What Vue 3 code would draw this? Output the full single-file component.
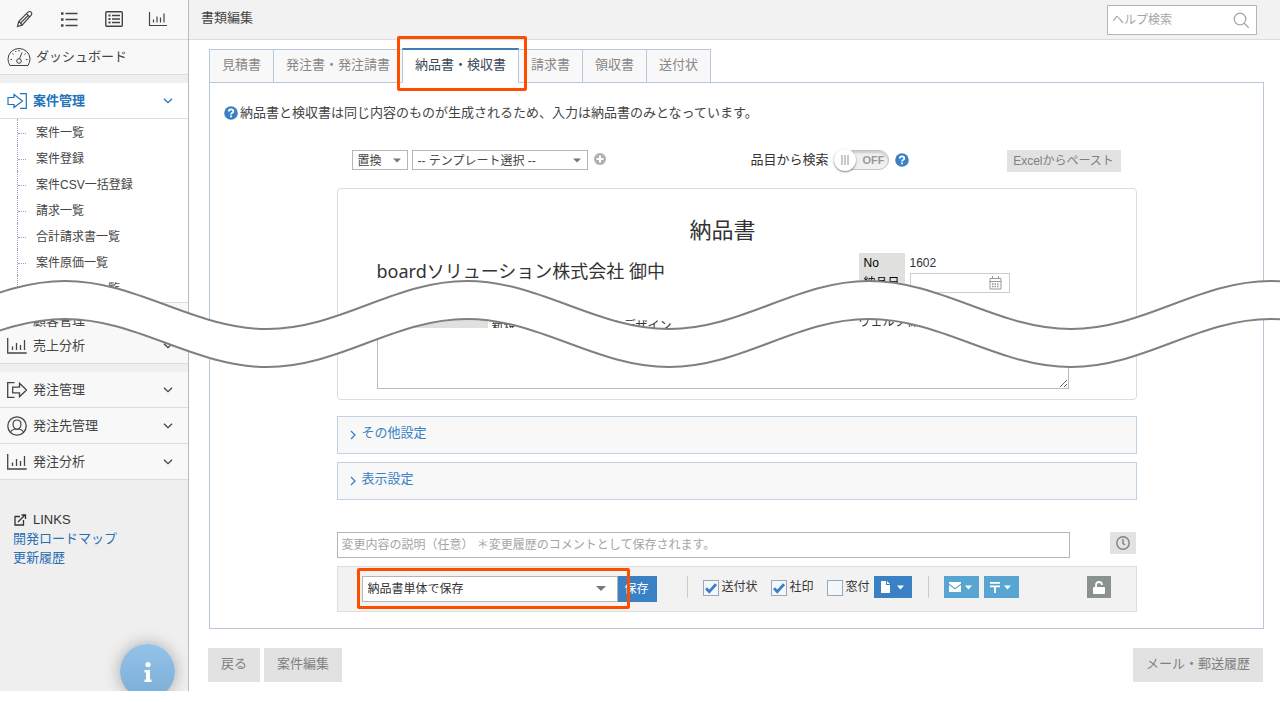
<script setup>
import { ref } from 'vue'

const tabs = ['見積書', '発注書・発注請書', '納品書・検収書', '請求書', '領収書', '送付状']
const activeTab = ref(2)

const subItems = ['案件一覧', '案件登録', '案件CSV一括登録', '請求一覧', '合計請求書一覧', '案件原価一覧', '案件別発注一覧']

const orderMenu = [
  { label: '発注管理', icon: 'out' },
  { label: '発注先管理', icon: 'person' },
  { label: '発注分析', icon: 'chart' },
]

const options = ref([
  { id: 'cover', label: '送付状', on: true },
  { id: 'seal', label: '社印', on: true },
  { id: 'window', label: '窓付', on: false },
])
</script>

<template>
  <div class="page">
    <aside class="sidebar">
      <nav class="quick">
        <button type="button" aria-label="編集">
          <svg width="20" height="20" viewBox="0 0 20 20"><path d="M2.500 17.500l1.200-5L13 3.200q1.800-1.400 3.200 0q1.300 1.400 0 3L7.100 16.200zM4 12.500l3.400 3.500M11.500 4.700l3.600 3.600M6 13.700l7.200-7.200" stroke-width="1.200" /></svg>
        </button>
        <button type="button" aria-label="一覧">
          <svg width="20" height="20" viewBox="0 0 20 20"><path d="M6.500 4.500h12M6.500 10.500h12M6.500 16.500h12" stroke-width="1.300" /><path d="M2 3.300h2.500v2.500h-2.500zM2 9.300h2.500v2.500h-2.500zM2 15.300h2.500v2.500h-2.500z" class="solid" /></svg>
        </button>
        <button type="button" aria-label="明細">
          <svg width="20" height="20" viewBox="0 0 20 20"><rect x="1.800" y="2.800" width="16.500" height="14.500" rx="1" stroke-width="1.400" /><path d="M8 6.500h8M8 10h8M8 13.500h8" stroke-width="1.300" /><path d="M4.500 6.500h2M4.500 10h2M4.500 13.500h2" stroke-width="1.800" /></svg>
        </button>
        <button type="button" aria-label="分析">
          <svg width="20" height="20" viewBox="0 0 20 20"><path d="M1.500 3v13.500h17.500M5.500 13.500v-3M9 13.500v-6M12.500 13.500v-5M16 13.500v-9" stroke-width="1.200" /></svg>
        </button>
      </nav>

      <a class="row dashboard" href="#dashboard">
        <svg width="24" height="20" viewBox="0 0 24 20"><path d="M3 18.500q-2-3-2-6.500a11 10.500 0 0 1 22 0q0 3.500-2 6.500z" /><circle cx="12" cy="14" r="2.300" /><path d="M12.500 11.700l2.500-6.200M3.500 12.500h1.500M19 12.500h1.500M5.500 6.500l1.200 1M17.500 7.500l1.200-1M12 3v1.500M8.500 4l.5 1" /></svg>
        <span>ダッシュボード</span>
      </a>

      <button type="button" class="row current">
        <svg width="20" height="16" viewBox="0 0 20 16"><path d="M1 4.500h6v-3l8.500 6.500-8.500 6.500v-3h-6zM13 .700h6.300v14.600h-6.300" stroke-width="1.200" /></svg>
        <span>案件管理</span>
        <svg class="chev" width="10" height="6" viewBox="0 0 10 6"><path d="M1 .7l4 4 4-4" /></svg>
      </button>
      <ul class="sub">
        <li v-for="item in subItems" :key="item"><a href="#item">{{ item }}</a></li>
      </ul>

      <div class="clipped">
        <button type="button" class="row">
          <svg width="20" height="20" viewBox="0 0 20 20"><path d="M2 9l6-5 10 4-2 6-6-3-3 3z" /></svg>
          <span>顧客管理</span>
        </button>
      </div>
      <button type="button" class="row">
        <svg width="20" height="20" viewBox="0 0 20 20"><path d="M.700 2v15h19M5.500 14v-3.500M9.500 14v-7M13.500 14v-5M17.500 14v-10" stroke-width="1.300" /></svg>
        <span>売上分析</span>
        <svg class="chev" width="10" height="6" viewBox="0 0 10 6"><path d="M1 .7l4 4 4-4" /></svg>
      </button>

      <div class="group">
        <button v-for="m in orderMenu" :key="m.label" type="button" class="row">
          <svg v-if="m.icon === 'out'" width="20" height="20" viewBox="0 0 20 20"><path d="M7.500 2.700h-6.800v14.600h6.800M5.700 7.200h6.800v-3.900l7 6.700-7 6.700v-3.900h-6.800z" stroke-width="1.300" /></svg>
          <svg v-else-if="m.icon === 'person'" width="20" height="20" viewBox="0 0 20 20"><circle cx="10" cy="10" r="9.200" stroke-width="1.300" /><path d="M10 4q4 0 4 4.500q-.500 4.500-4 4.500t-4-4.500q0-4.500 4-4.500zM3.500 16.500q.500-2.500 4.500-3.500l2 .5 2-.5q4 1 4.500 3.500" stroke-width="1.200" /></svg>
          <svg v-else width="20" height="20" viewBox="0 0 20 20"><path d="M.700 2v15h19M5.500 14v-3.500M9.500 14v-7M13.500 14v-5M17.500 14v-10" stroke-width="1.300" /></svg>
          <span>{{ m.label }}</span>
          <svg class="chev" width="10" height="6" viewBox="0 0 10 6"><path d="M1 .7l4 4 4-4" /></svg>
        </button>
      </div>

      <div class="links">
        <p>
          <svg width="14" height="14" viewBox="0 0 14 14"><path d="M7 3.500h-5v8.500h8.500v-5M5 9l6.500-6.500M8.500 2h4v4" stroke-width="1.300" /></svg>
          LINKS
        </p>
        <a href="#roadmap">開発ロードマップ</a>
        <a href="#updates">更新履歴</a>
      </div>

      <button type="button" class="info" aria-label="情報">
        <svg width="8" height="20" viewBox="0 0 8 20"><circle cx="4" cy="2.600" r="2.600" /><path d="M.500 8h5.500v9.500h1.500v2.500h-7v-2.500h1.500v-7h-1.500z" /></svg>
      </button>
    </aside>

    <main class="main">
      <header class="top">
        <h1>書類編集</h1>
        <div class="search">
          <input type="text" placeholder="ヘルプ検索" aria-label="ヘルプ検索">
          <svg width="18" height="18" viewBox="0 0 18 18"><circle cx="8" cy="8" r="5.800" /><path d="M12.200 12.200l4.500 4.500" /></svg>
        </div>
      </header>

      <div class="content">
        <div class="tabs" role="tablist">
          <button
            v-for="(t, i) in tabs"
            :key="t"
            type="button"
            role="tab"
            :aria-selected="i === activeTab"
            :class="{ active: i === activeTab }"
            @click="activeTab = i"
          >{{ t }}</button>
        </div>

        <section class="panel">
          <p class="note">
            <svg class="help" width="14" height="14" viewBox="0 0 14 14"><circle cx="7" cy="7" r="6.800" /><path d="M4.800 5.500q0-2.200 2.200-2.200t2.300 1.900q0 1.200-1.300 1.800q-1 .500-1 1.500M7 9.500v1.700" /></svg>
            納品書と検収書は同じ内容のものが生成されるため、入力は納品書のみとなっています。
          </p>

          <div class="column">
            <div class="toolbar">
              <span class="select mode">
                <select aria-label="適用方法"><option>置換</option></select>
                <svg width="8" height="5" viewBox="0 0 8 5"><path d="M0 .5h8l-4 4z" /></svg>
              </span>
              <span class="select template">
                <select aria-label="テンプレート"><option>-- テンプレート選択 --</option></select>
                <svg width="8" height="5" viewBox="0 0 8 5"><path d="M0 .5h8l-4 4z" /></svg>
              </span>
              <button type="button" class="plus" aria-label="追加">
                <svg width="12" height="12" viewBox="0 0 12 12"><circle cx="6" cy="6" r="6" /><path d="M6 2.500v7M2.500 6h7" /></svg>
              </button>
              <label class="switch">
                品目から検索
                <input type="checkbox">
                <span class="track"><i class="knob"></i>OFF</span>
              </label>
              <svg class="help" width="14" height="14" viewBox="0 0 14 14"><circle cx="7" cy="7" r="6.800" /><path d="M4.800 5.500q0-2.200 2.200-2.200t2.300 1.900q0 1.200-1.300 1.800q-1 .500-1 1.500M7 9.500v1.700" /></svg>
              <button type="button" class="gray excel">Excelからペースト</button>
            </div>

            <article class="doc">
              <h2>納品書</h2>
              <div class="doc-head">
                <div>
                  <p class="client">boardソリューション株式会社 御中</p>
                  <dl class="subject"><dt>件名</dt><dd>新規コーポレートサイトデザイン</dd></dl>
                </div>
                <div>
                  <table>
                    <tbody>
                      <tr><th>No</th><td>1602</td></tr>
                      <tr>
                        <th><label for="date">納品日</label></th>
                        <td>
                          <span class="date">
                            <input id="date" type="text">
                            <svg width="13" height="14" viewBox="0 0 13 14"><path d="M1 2.500h11v10.500h-11zM1 5.500h11M3.500 0v3M9.500 0v3" /><path d="M3 8h7.500M3 10.500h7.500" stroke-dasharray="1.500 1" stroke-width="1.500" /></svg>
                          </span>
                        </td>
                      </tr>
                    </tbody>
                  </table>
                  <p class="company">ヴェルク株式会社</p>
                </div>
              </div>
              <textarea aria-label="備考"></textarea>
            </article>

            <div class="accordions">
              <button v-for="name in ['その他設定', '表示設定']" :key="name" type="button">
                <svg width="6" height="10" viewBox="0 0 6 10"><path d="M1 1l4 4-4 4" /></svg>
                {{ name }}
              </button>
            </div>

            <div class="comment">
              <input type="text" aria-label="変更内容の説明" placeholder="変更内容の説明（任意） ＊変更履歴のコメントとして保存されます。">
              <button type="button" class="gray clock" aria-label="履歴">
                <svg width="14" height="14" viewBox="0 0 14 14"><circle cx="7" cy="7" r="6.200" /><path d="M7 3v4.500l2 1.500" /></svg>
              </button>
            </div>

            <div class="actions">
              <span class="select save-mode">
                <select aria-label="保存方法"><option>納品書単体で保存</option></select>
                <svg width="10" height="5" viewBox="0 0 10 5"><path d="M0 0h10l-5 5z" /></svg>
              </span>
              <button type="button" class="save">保存</button>
              <span class="rule"></span>
              <label v-for="o in options" :key="o.id" class="check">
                <input v-model="o.on" type="checkbox">
                <span class="box"><svg v-if="o.on" width="12" height="12" viewBox="0 0 12 12"><path d="M1 6.200l3.300 3.500 6.700-7.500" /></svg></span>
                {{ o.label }}
              </label>
              <button type="button" class="menu file" aria-label="ファイル">
                <svg width="9" height="12" viewBox="0 0 9 12"><path d="M0 0h5v4h4v8h-9zM6 0l3 3h-3z" /></svg>
                <svg width="8" height="5" viewBox="0 0 8 5"><path d="M0 .5h7l-3.500 4z" /></svg>
              </button>
              <span class="rule second"></span>
              <button type="button" class="menu light" aria-label="メール">
                <svg width="12" height="10" viewBox="0 0 12 10"><path d="M0 0h12v1.500l-6 4.500-6-4.500zM0 3l6 4.500 6-4.500v7h-12z" /></svg>
                <svg width="8" height="5" viewBox="0 0 8 5"><path d="M0 .5h7l-3.500 4z" /></svg>
              </button>
              <button type="button" class="menu light" aria-label="郵送">
                <svg width="10" height="11" viewBox="0 0 10 11"><path d="M0 0h10v1.700h-10zM0 3.500h10v1.700h-4.100v5.800h-1.800v-5.800h-4.100z" /></svg>
                <svg width="8" height="5" viewBox="0 0 8 5"><path d="M0 .5h7l-3.500 4z" /></svg>
              </button>
              <button type="button" class="menu lock" aria-label="ロック解除">
                <svg width="12" height="13" viewBox="0 0 12 13"><rect y="6" width="12" height="7" rx="1" /><path d="M3 7v-3q0-3 3-3t3 3" fill="none" stroke="#fff" stroke-width="1.800" /></svg>
              </button>
            </div>
          </div>
        </section>
      </div>

      <footer class="bottom">
        <button type="button" class="gray">戻る</button>
        <button type="button" class="gray">案件編集</button>
        <button type="button" class="gray mail">メール・郵送履歴</button>
      </footer>
    </main>

    <svg class="wave" viewBox="0 0 1280 90" preserveAspectRatio="none">
      <path class="band" d="M-136 54C-63 54-8 6 65 6S194 54 267 54 394 6 467 6 596 54 669 54 796 6 869 6 998 54 1071 54 1198 6 1271 6 1400 54 1473 54V92C1400 92 1344 44 1271 44S1144 92 1071 92 942 44 869 44 742 92 669 92 540 44 467 44 340 92 267 92 138 44 65 44-63 92-136 92z" />
    </svg>
  </div>
</template>

<style>
body {
  margin: 0;
  background: #fff;
}
</style>

<style scoped>
* {
  box-sizing: border-box;
}
.page {
  position: relative;
  display: flex;
  overflow: hidden;
  font: 13px/20px "Liberation Sans", "Noto Sans CJK JP", sans-serif;
  color: #444;
}
h1, h2, p, ul, dl, dd {
  margin: 0;
  padding: 0;
}
button, input, select, textarea {
  font: inherit;
  color: inherit;
  margin: 0;
  padding: 0;
  border: 0;
  border-radius: 0;
  background: none;
}
button {
  cursor: pointer;
}
a {
  color: inherit;
  text-decoration: none;
}
svg {
  display: block;
  flex: none;
  fill: none;
  stroke: currentColor;
}

/* sidebar */
.sidebar {
  position: relative;
  flex: none;
  width: 189px;
  overflow: hidden;
  background: #efefef;
  border-right: 1px solid #bbb;
}
.quick {
  display: flex;
  justify-content: space-between;
  align-items: center;
  height: 40px;
  padding: 0 20px 2px 15px;
  background: #f8f8f8;
  border-bottom: 1px solid #ddd;
}
.quick .solid {
  fill: currentColor;
  stroke: none;
}
.row {
  display: flex;
  align-items: center;
  gap: 6px;
  width: 100%;
  height: 36px;
  padding: 0 15px 0 7px;
  background: #f8f8f8;
  border-bottom: 1px solid #ddd;
  text-align: left;
}
.row .chev {
  margin-left: auto;
  stroke-width: 1.300;
}
.dashboard {
  height: 35px;
  gap: 5px;
}
.current {
  margin-top: 8px;
  background: #fff;
  color: #2273b9;
  font-weight: bold;
}
.sub {
  list-style: none;
  background: #fff;
  padding-left: 17px;
  height: 183px;
  overflow: hidden;
}
.sub li {
  display: flex;
  align-items: center;
  height: 26px;
  padding-top: 2px;
  border-left: 1px dotted #8fa4bb;
  font-size: 12px;
}
.sub li::before {
  content: "";
  width: 8px;
  margin-right: 10px;
  border-top: 1px dotted #8fa4bb;
}
.clipped {
  height: 26px;
  overflow: hidden;
  border-top: 1px solid #ddd;
}
.group {
  margin-top: 8px;
}
.links {
  padding: 30px 13px 120px;
  line-height: 19px;
}
.links p {
  display: flex;
  align-items: center;
  gap: 6px;
  color: #333;
}
.links a {
  display: block;
  color: #2a6fb5;
}
.info {
  position: absolute;
  right: 13px;
  bottom: -8px;
  display: flex;
  align-items: center;
  justify-content: center;
  width: 55px;
  height: 55px;
  border-radius: 50%;
  color: #fff;
  background: linear-gradient(#94c3e9, #7badd6);
  box-shadow: 0 0 16px rgba(0, 0, 0, .3);
}
.info svg {
  fill: #fff;
  stroke: none;
}

/* header and tabs */
.main {
  flex: 1;
  min-width: 0;
  padding-bottom: 9px;
}
.top {
  display: flex;
  justify-content: space-between;
  height: 40px;
  padding: 5px 23px 0 12px;
  background: #f2f2f2;
  border-bottom: 1px solid #ddd;
}
.top h1 {
  font-size: 13px;
  font-weight: normal;
  line-height: 26px;
}
.search {
  display: flex;
  align-items: center;
  width: 150px;
  height: 30px;
  padding: 0 6px 0 4px;
  background: #fff;
  border: 1px solid #b5b5b5;
  color: #a5a5a5;
}
.search input {
  flex: 1;
  min-width: 0;
  font-size: 12px;
}
.search svg {
  stroke-width: 1.300;
}
::placeholder {
  color: #a5a5a5;
  opacity: 1;
}
.content {
  padding: 8px 16px 0 20px;
}
.tabs {
  display: flex;
  align-items: flex-end;
  height: 35px;
  margin-bottom: -1px;
  padding-left: 1px;
}
.tabs button {
  position: relative;
  height: 34px;
  margin-left: -1px;
  padding: 0 12px 2px;
  color: #888;
  background: #f8f8f8;
  border: 1px solid #b9c8d9;
}
.tabs .active {
  z-index: 1;
  height: 35px;
  color: #3c4858;
  background: #fff;
  border-top: 2px solid #3e7db5;
  border-bottom-color: #fff;
}
.tabs .active::after,
.save-mode::after {
  content: "";
  position: absolute;
  inset: -14px -9px -9px -6px;
  border: 3px solid #ff4d00;
  border-radius: 2px;
  pointer-events: none;
}
.panel {
  border: 1px solid #b9c8d9;
  padding: 20px 0 16px;
}
.note {
  display: flex;
  align-items: center;
  gap: 2px;
  padding-left: 14px;
}
.help circle {
  fill: #3a80c4;
  stroke: none;
}
.help path {
  stroke: #fff;
  stroke-width: 1.800;
}
.column {
  width: 800px;
  max-width: 100%;
  margin: 27px auto 0;
}

/* toolbar */
.toolbar {
  display: flex;
  align-items: flex-start;
  height: 22px;
  padding: 0 16px 0 15px;
  font-size: 12px;
}
.select {
  position: relative;
  display: flex;
}
.select select {
  appearance: none;
  width: 100%;
  padding: 0 5px;
  background: #fff;
  border: 1px solid #b5b5b5;
  font-size: 12px;
}
.select svg {
  position: absolute;
  top: 8px;
  right: 7px;
  fill: #777;
  stroke: none;
  pointer-events: none;
}
.mode {
  width: 56px;
  height: 20px;
  margin-right: 4px;
}
.template {
  width: 176px;
  height: 20px;
}
.plus {
  margin: 3px 0 0 6px;
}
.plus circle {
  fill: #b0b0b0;
  stroke: none;
}
.plus path {
  stroke: #fff;
  stroke-width: 2;
}
.switch {
  display: flex;
  gap: 5px;
  margin: 0 6px 0 auto;
  font-size: 13px;
  color: #333;
}
.switch input,
.check input {
  position: absolute;
  opacity: 0;
}
.track {
  position: relative;
  width: 55px;
  height: 20px;
  padding-right: 3px;
  border: 1px solid #c4c4c4;
  border-radius: 10px;
  background: #f0f0f0;
  box-shadow: inset 0 2px 2px #ccc;
  text-align: right;
  font-size: 11px;
  font-weight: bold;
  line-height: 19px;
  color: #999;
}
.knob {
  position: absolute;
  left: -1px;
  top: -2px;
  display: flex;
  align-items: center;
  justify-content: center;
  width: 22px;
  height: 22px;
  border-radius: 50%;
  background: #fff;
  box-shadow: 0 1px 2px rgba(0, 0, 0, .5);
}
.knob::before {
  content: "";
  width: 8px;
  height: 10px;
  background: repeating-linear-gradient(90deg, #c8c8c8 0 2px, #fff 2px 3px);
}
.toolbar > .help {
  margin-top: 3px;
}
.gray {
  background: #e2e2e2;
  color: #808080;
}
.excel {
  width: 114px;
  height: 22px;
  margin-left: 98px;
}

/* document */
.doc {
  margin-top: 16px;
  padding: 26px 0 10px 39px;
  border: 1px solid #ddd;
  border-radius: 4px;
  color: #333;
}
.doc h2 {
  width: 692px;
  font-size: 22px;
  font-weight: normal;
  line-height: 32px;
  text-align: center;
}
.doc-head {
  display: grid;
  grid-template-columns: 482px 1fr;
  height: 75px;
  margin-top: 6px;
  overflow: hidden;
  font-size: 12px;
}
.client {
  padding-top: 6px;
  font-family: "Noto Sans", "Noto Sans CJK JP", sans-serif;
  font-size: 18px;
  line-height: 24px;
}
.subject {
  display: flex;
  gap: 4px;
  margin-top: 33px;
}
.subject dt {
  width: 111px;
  padding-left: 5px;
  background: #e0e0de;
}
table {
  border-collapse: collapse;
}
th {
  width: 46px;
  height: 20px;
  padding: 0 5px;
  background: #e0e0de;
  color: #000;
  font-weight: normal;
  text-align: left;
}
td {
  padding: 0 0 0 5px;
}
.date {
  display: flex;
  align-items: center;
  width: 100px;
  height: 20px;
  padding-right: 7px;
  border: 1px solid #ccc;
  color: #999;
}
.date input {
  flex: 1;
  min-width: 0;
}
.company {
  margin-top: 19px;
}
.doc textarea {
  display: block;
  width: 692px;
  height: 61px;
  border: 1px solid #bbb;
  border-top: 0;
  background: #fff;
}

/* settings and saving */
.accordions {
  display: grid;
  gap: 8px;
  margin-top: 16px;
}
.accordions button {
  display: flex;
  align-items: center;
  gap: 6px;
  height: 38px;
  padding: 0 12px 4px;
  background: #f8f8f8;
  border: 1px solid #c3d2e2;
  color: #3a80c4;
}
.accordions svg {
  margin-top: 4px;
  stroke-width: 1.300;
}
.comment {
  display: flex;
  justify-content: space-between;
  align-items: flex-start;
  margin-top: 32px;
  padding-right: 1px;
}
.comment input {
  width: 733px;
  height: 26px;
  padding: 0 4px;
  border: 1px solid #b5b5b5;
  font-size: 12px;
}
.clock {
  display: flex;
  align-items: center;
  justify-content: center;
  width: 26px;
  height: 22px;
}
.clock svg {
  stroke-width: 1.400;
}
.actions {
  display: flex;
  align-items: flex-start;
  height: 46px;
  margin-top: 8px;
  padding: 9px 25px 0 24px;
  background: #f2f2f2;
  border: 1px solid #ddd;
  font-size: 12px;
  color: #333;
}
.save-mode {
  width: 256px;
  height: 26px;
}
.save-mode::after {
  inset: -8px -12px -7px -5px;
}
.save-mode svg {
  top: 10px;
  right: 12px;
}
.save {
  width: 40px;
  height: 26px;
  margin-left: -1px;
  background: #3a80c4;
  color: #fff;
}
.rule {
  width: 1px;
  height: 22px;
  margin: 0 15px 0 30px;
  background: #ccc;
}
.rule.second {
  margin: 0 15px 0 16px;
}
.check {
  display: flex;
  gap: 3px;
  margin-right: 13px;
  line-height: 22px;
}
.check:has(+ .file) {
  margin-right: 4px;
}
.box {
  display: flex;
  align-items: center;
  justify-content: center;
  width: 16px;
  height: 16px;
  margin-top: 4px;
  border: 1px solid #98a8b8;
  background: #f4f8fd;
}
.box svg {
  stroke: #3a80c4;
  stroke-width: 2.800;
}
.menu {
  display: flex;
  align-items: center;
  justify-content: center;
  gap: 4px;
  width: 35px;
  height: 22px;
  margin-right: 5px;
  background: #58a5d1;
}
.menu svg {
  fill: #fff;
  stroke: none;
}
.file {
  width: 38px;
  gap: 7px;
  margin-right: 0;
  background: #3a80c4;
}
.lock {
  width: 24px;
  margin: 0 0 0 auto;
  background: #8a9191;
}
.bottom {
  display: flex;
  gap: 4px;
  margin-top: 19px;
  padding: 0 17px 0 19px;
}
.bottom button {
  height: 34px;
  padding: 0 13px 2px;
}
.bottom .mail {
  margin-left: auto;
}

/* torn band joining the two halves of the page */
.wave {
  position: absolute;
  top: 275px;
  left: 0;
  z-index: 2;
  width: 100%;
  height: 90px;
  overflow: visible;
  pointer-events: none;
}
.band {
  fill: #fff;
  stroke: #808080;
  stroke-width: 2;
  vector-effect: non-scaling-stroke;
}
</style>
